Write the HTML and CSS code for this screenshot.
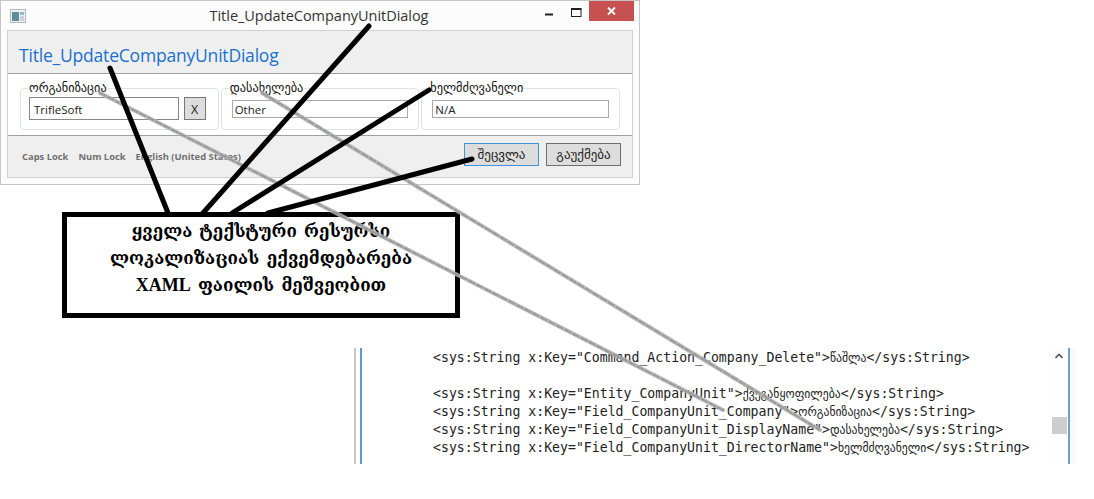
FILE: index.html
```html
<!DOCTYPE html>
<html lang="ka">
<head>
<meta charset="utf-8">
<title>Title_UpdateCompanyUnitDialog</title>
<link rel="stylesheet" href="styles.css">
</head>
<body>
<div class="page">
  <section class="window">
    <div class="titlebar">
      <svg class="app-icon" width="16" height="14" viewBox="0 0 16 14"><rect x="0.5" y="0.5" width="15" height="13" fill="#eef1f3" stroke="#b5b9bc"/><rect x="2" y="3" width="7" height="9" fill="#5f8f96"/><rect x="10" y="3" width="4" height="3" fill="#8fb6c9"/><rect x="10" y="7" width="4" height="5" fill="#c9d3d8"/></svg>
      <span class="window-title">Title_UpdateCompanyUnitDialog</span>
      <div class="controls">
        <svg class="ctl-min" width="8" height="3" viewBox="0 0 8 3"><rect width="8" height="2" y="0.5" fill="#222"/></svg>
        <svg class="ctl-max" width="11" height="9" viewBox="0 0 11 9"><rect x="0.5" y="1" width="9.5" height="7.5" fill="none" stroke="#222"/><rect x="0" y="0" width="10.5" height="2" fill="#222"/></svg>
        <div class="ctl-close"><svg width="9" height="8" viewBox="0 0 9 8"><path d="M1 0.5L8 7.5M8 0.5L1 7.5" stroke="#fff" stroke-width="2"/></svg></div>
      </div>
    </div>
    <div class="dialog">
      <header class="dialog-head">Title_UpdateCompanyUnitDialog</header>
      <div class="groups">
        <fieldset class="group">
          <legend>ორგანიზაცია</legend>
          <div class="field-row field-row-first">
            <span class="input input-dark">TrifleSoft</span>
            <span class="clear-btn">X</span>
          </div>
        </fieldset>
        <fieldset class="group">
          <legend>დასახელება</legend>
          <div class="field-row"><span class="input">Other</span></div>
        </fieldset>
        <fieldset class="group">
          <legend>ხელმძღვანელი</legend>
          <div class="field-row"><span class="input">N/A</span></div>
        </fieldset>
      </div>
      <footer class="dialog-foot">
        <div class="status"><span>Caps Lock</span><span>Num Lock</span><span>English (United States)</span></div>
        <div class="actions"><span class="btn btn-primary">შეცვლა</span><span class="btn">გაუქმება</span></div>
      </footer>
    </div>
  </section>

  <div class="callout">ყველა ტექსტური რესურსი<br>ლოკალიზაციას ექვემდებარება<br><span class="latin">XAML</span> ფაილის მეშვეობით</div>

  <section class="editor">
    <div class="gutter"></div>
    <div class="code">
      <div class="line">&lt;sys:String x:Key="Command_Action_Company_Delete"&gt;<span class="ka">წაშლა</span>&lt;/sys:String&gt;</div>
      <div class="line">&nbsp;</div>
      <div class="line">&lt;sys:String x:Key="Entity_CompanyUnit"&gt;<span class="ka">ქვეგანყოფილება</span>&lt;/sys:String&gt;</div>
      <div class="line">&lt;sys:String x:Key="Field_CompanyUnit_Company"&gt;<span class="ka">ორგანიზაცია</span>&lt;/sys:String&gt;</div>
      <div class="line">&lt;sys:String x:Key="Field_CompanyUnit_DisplayName"&gt;<span class="ka">დასახელება</span>&lt;/sys:String&gt;</div>
      <div class="line">&lt;sys:String x:Key="Field_CompanyUnit_DirectorName"&gt;<span class="ka">ხელმძღვანელი</span>&lt;/sys:String&gt;</div>
    </div>
    <div class="scrollbar">
      <svg class="scroll-up" width="8" height="6" viewBox="0 0 8 6"><path d="M0.5 5L4 1.5L7.5 5" fill="none" stroke="#555" stroke-width="1.6"/></svg>
      <div class="scroll-thumb"></div>
    </div>
    <div class="edge"></div>
  </section>

  <svg class="arrows" width="1094" height="499" viewBox="0 0 1094 499">
    <g class="arrows-gray">
      <path d="M100 93L723 410"/>
      <path d="M262 93L820 430"/>
    </g>
    <g class="arrows-grain">
      <path d="M100 93L723 410"/>
      <path d="M262 93L820 430"/>
    </g>
    <g class="arrows-black">
      <path d="M110 68L168 213"/>
      <path d="M369 26L203 213"/>
      <path d="M429 90L232 213"/>
      <path d="M472 159L268 213"/>
    </g>
  </svg>
</div>
</body>
</html>
```
FILE: styles.css
```css
* { box-sizing: border-box; }
html, body { margin: 0; padding: 0; background: #fff; }
body { width: 1094px; height: 499px; overflow: hidden; font-family: "Open Sans", "DejaVu Sans", sans-serif; color: #222; }
.page { position: relative; width: 1094px; height: 499px; display: flex; flex-direction: column; }

.window { width: 640px; height: 185px; border: 1px solid #c6c6c6; background: #fcfcfc; padding: 0 6px 6px; display: flex; flex-direction: column; flex: none; }
.titlebar { height: 29px; display: flex; align-items: flex-start; position: relative; flex: none; }
.app-icon { margin: 8px 0 0 3px; }
.window-title { position: absolute; left: 0; right: 0; top: 5px; padding-right: 2px; text-align: center; font-size: 14.5px; line-height: 20px; color: #333; letter-spacing: -0.03px; }
.controls { position: absolute; right: -1px; top: 0; display: flex; align-items: flex-start; }
.ctl-min { margin: 12px 18px 0 0; }
.ctl-max { margin: 7px 7px 0 0; }
.ctl-close { width: 45px; height: 20px; background: #c75050; display: flex; align-items: center; justify-content: center; }

.dialog { flex: 1; border: 1px solid #d0d0d0; background: #fff; display: flex; flex-direction: column; }
.dialog-head { height: 43px; background: #efefef; border-bottom: 1px solid #a0a0a0; padding-left: 11px; font-size: 17.5px; line-height: 49px; color: #1a6fd0; letter-spacing: -0.2px; flex: none; }
.groups { height: 61px; padding: 7px 12px 0; display: flex; gap: 2px; flex: none; }
.group { width: 199px; height: 49px; margin: 0; padding: 0 10px; border: 1px solid #dbe4ec; border-radius: 4px; min-width: 0; }
.group legend { padding: 0 1px; margin-left: -3px; font-family: "DejaVu Sans", sans-serif; font-size: 12.3px; line-height: 14px; color: #111; }
.field-row { display: flex; margin-top: 5px; }
.field-row-first { margin: 2px 2px 0 -2px; gap: 5px; }
.input { flex: 1; height: 18px; border: 1px solid #a9a9a9; background: #fff; font-size: 11.5px; line-height: 17px; padding-left: 2px; color: #222; }
.input-dark { height: 23px; border-color: #888; line-height: 23px; padding-left: 4px; font-size: 11.5px; }
.clear-btn { width: 22px; height: 23px; border: 1px solid #777; background: #dddddd; font-size: 12.5px; line-height: 23px; text-align: center; }

.dialog-foot { flex: 1; background: #efefef; border-top: 1px solid #a0a0a0; display: flex; justify-content: space-between; padding: 7px 11px 0 14px; }
.status { display: flex; gap: 10px; font-size: 9.4px; font-weight: 700; color: #707070; line-height: 28px; }
.actions { display: flex; gap: 7px; }
.btn { width: 75px; height: 23px; border: 1px solid #6f6f6f; background: #dddddd; font-family: "DejaVu Sans", sans-serif; font-size: 13px; line-height: 22px; text-align: center; color: #222; }
.btn-primary { border-color: #3f94e0; }

.callout { width: 398px; height: 106px; margin: 27px 0 0 62px; border: 5px solid #000; background: #fff; font-family: "Liberation Serif", "DejaVu Serif", serif; font-weight: 700; font-size: 17px; line-height: 27px; word-spacing: 3px; text-align: center; color: #000; padding-top: 1px; flex: none; }
.latin { font-size: 18px; }

.editor { height: 116px; margin: 30px 0 0 354px; width: 722px; display: flex; flex: none; }
.gutter { width: 8px; border-left: 2px solid #c8c8c8; border-right: 2px solid #5b9bd5; flex: none; }
.code { flex: 1; padding: 1px 0 0 71px; font-family: "DejaVu Sans Mono", "Liberation Mono", monospace; font-size: 13.2px; line-height: 18px; color: #222; white-space: nowrap; overflow: hidden; }
.ka { font-family: "DejaVu Sans", sans-serif; font-size: 11.7px; }
.scrollbar { width: 18px; background: #fdfdfd; border-right: 2px solid #6f9fd0; position: relative; flex: none; }
.scroll-up { position: absolute; left: 3px; top: 5px; }
.scroll-thumb { position: absolute; left: 0; top: 69px; width: 15px; height: 17px; background: #cdcdcd; }
.edge { width: 6px; background: #fafafa; flex: none; }

.arrows { position: absolute; left: 0; top: 0; pointer-events: none; }
.arrows path { fill: none; stroke-linecap: round; }
.arrows-black path { stroke: #000; stroke-width: 5; }
.arrows-gray path { stroke: #b4b4b4; stroke-width: 4; stroke-opacity: 0.9; }
.arrows-grain path { stroke: #8c8c8c; stroke-width: 2; stroke-dasharray: 3 2 1 3; stroke-opacity: 0.7; }
```
